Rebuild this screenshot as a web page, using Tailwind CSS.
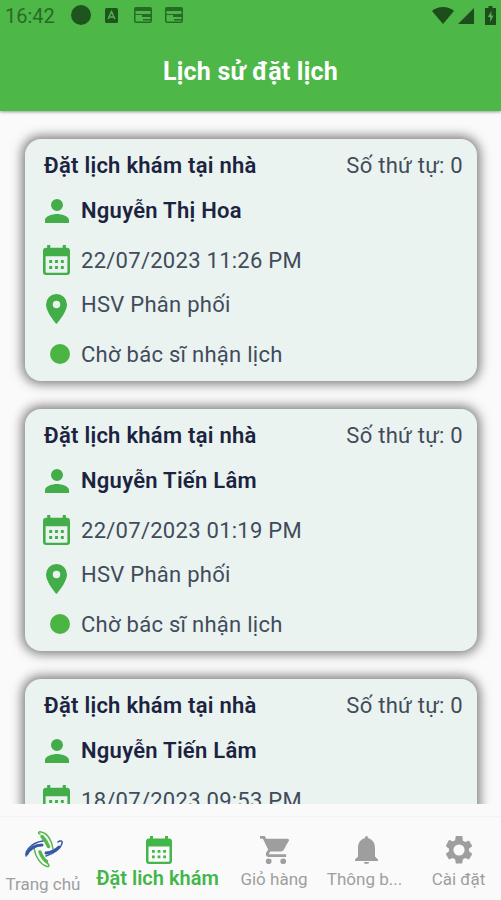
<!DOCTYPE html>
<html lang="vi">
<head>
  <meta charset="UTF-8" />
  <meta name="viewport" content="width=device-width, initial-scale=1" />
  <title>Lịch sử đặt lịch</title>
  <script src="https://cdn.jsdelivr.net/npm/@tailwindcss/browser@4"></script>
</head>
<body class="bg-[#fafafa] font-[Roboto,sans-serif]">
  <!-- Shared icons -->
  <svg class="hidden">
    <symbol id="person" viewBox="4 4 16 16"><path d="M12 12a4 4 0 1 0 0-8 4 4 0 0 0 0 8zm0 2c-2.67 0-8 1.34-8 4v2h16v-2c0-2.66-5.33-4-8-4z" /></symbol>
    <symbol id="calendar" viewBox="0 0 26 28" preserveAspectRatio="none"><path fill-rule="evenodd" d="M4 0h3v2.500h12V0h3v2.500h1a3 3 0 0 1 3 3V25a3 3 0 0 1-3 3H3a3 3 0 0 1-3-3V5.500a3 3 0 0 1 3-3h1zM2.500 10.500V25q0 .8.8.8h19.400q.8 0 .8-.8V10.500zM6 14h2.800v2.800H6zm5.600 0h2.800v2.800h-2.800zm5.600 0H20v2.800h-2.800zM6 19.500h2.800v2.800H6zm5.600 0h2.800v2.800h-2.800zm5.600 0H20v2.800h-2.800z" /></symbol>
    <symbol id="pin" viewBox="5 2 14 20"><path d="M12 2a7 7 0 0 0-7 7c0 5.250 7 13 7 13s7-7.750 7-13a7 7 0 0 0-7-7zm0 9.500a2.500 2.500 0 1 1 0-5 2.500 2.500 0 0 1 0 5z" /></symbol>
    <symbol id="window" viewBox="0 0 18 16"><path fill-rule="evenodd" d="M2 0h14a2 2 0 0 1 2 2v12a2 2 0 0 1-2 2H2a2 2 0 0 1-2-2V2a2 2 0 0 1 2-2zM1.500 4v3h15V4zM1.500 8v6.500h14.500q.5 0 .5-.5V8z" /><path d="M8 8h9v2H8zM9 12h8v1.500H9z" /></symbol>
  </svg>

  <div class="flex h-[900px] w-[501px] flex-col overflow-hidden">
    <header class="relative z-10 h-[111px] shrink-0 bg-[#4db748] shadow-[0_1px_3px_rgba(0,0,0,0.4)]">
      <div class="flex h-[30px] items-center pl-[5px] pr-[5px] text-[#1d531c]">
        <span class="w-[66px] pt-px text-[20px] leading-[30px] text-[#286b26]">16:42</span>
        <span class="h-5 w-5 rounded-full bg-[#1f551d]"></span>
        <svg class="ml-[14px] h-[15px] w-[13px]" viewBox="0 0 13 15"><rect width="13" height="15" rx="1.500" fill="#1f551d" /><path d="M3.200 11 6.500 3.500l3.300 7.500M4.500 9h4" fill="none" stroke="#4db748" stroke-width="1.500" /></svg>
        <svg class="ml-4 h-4 w-[18px]" fill="#276a25"><use href="#window" /></svg>
        <svg class="ml-[13px] h-4 w-[18px]" fill="#276a25"><use href="#window" /></svg>
        <svg class="ml-auto h-[17px] w-[22px]" viewBox="0 0 22 17" fill="#1d4d1b"><path d="M0 4C6-1.300 16-1.300 22 4L11 17z" /></svg>
        <svg class="ml-1 mt-px h-4 w-4" viewBox="0 0 16 16" fill="#1d4d1b"><path d="M16 0v16H0z" /></svg>
        <svg class="ml-[11px] h-[19px] w-[11px]" viewBox="0 0 11 19" fill="#1d4d1b"><path d="M3.500 0h4v2H11v17H0V2h3.500z" /><path d="M6.500 5 2.800 11h2.400v5L8.600 9.500H6.200z" fill="#4db748" /></svg>
      </div>
      <h1 class="pt-[26px] text-center text-[25px] font-bold leading-[32px] tracking-[0.2px] text-white">Lịch sử đặt lịch</h1>
    </header>

    <main class="flex h-[693px] shrink-0 flex-col gap-7 overflow-hidden pl-[25px] pr-6 pt-7">
      <article class="h-[242px] shrink-0 rounded-[16px] bg-[#eaf3ef] pl-[18px] pr-[14px] pt-[4px] text-[22px] tracking-[0.27px] text-[#414b5c] shadow-[0_0_11px_3px_rgba(0,0,0,0.5)]">
        <div class="flex h-[45px] items-center justify-between">
          <h2 class="ml-px font-semibold text-[#1b2340]">Đặt lịch khám tại nhà</h2>
          <span>Số thứ tự: 0</span>
        </div>
        <div class="flex h-[45px] items-center">
          <svg class="ml-[2px] mr-[12px] h-6 w-6" fill="#43ae49"><use href="#person" /></svg>
          <span class="font-semibold text-[#1b2340]">Nguyễn Thị Hoa</span>
        </div>
        <div class="flex h-[54px] items-center">
          <svg class="mr-[11px] h-[30px] w-[27px]" fill="#43ae49"><use href="#calendar" /></svg>
          <span>22/07/2023 11:26 PM</span>
        </div>
        <div class="flex h-[35px] items-center">
          <svg class="ml-[3px] mr-[14px] mt-[9px] h-[30px] w-[21px]" fill="#43ae49"><use href="#pin" /></svg>
          <span>HSV Phân phối</span>
        </div>
        <div class="flex h-[64px] items-center">
          <span class="ml-[7px] mr-[11px] h-5 w-5 rounded-full bg-[#4bb543]"></span>
          <span>Chờ bác sĩ nhận lịch</span>
        </div>
      </article>

      <article class="h-[242px] shrink-0 rounded-[16px] bg-[#eaf3ef] pl-[18px] pr-[14px] pt-[4px] text-[22px] tracking-[0.27px] text-[#414b5c] shadow-[0_0_11px_3px_rgba(0,0,0,0.5)]">
        <div class="flex h-[45px] items-center justify-between">
          <h2 class="ml-px font-semibold text-[#1b2340]">Đặt lịch khám tại nhà</h2>
          <span>Số thứ tự: 0</span>
        </div>
        <div class="flex h-[45px] items-center">
          <svg class="ml-[2px] mr-[12px] h-6 w-6" fill="#43ae49"><use href="#person" /></svg>
          <span class="font-semibold text-[#1b2340]">Nguyễn Tiến Lâm</span>
        </div>
        <div class="flex h-[54px] items-center">
          <svg class="mr-[11px] h-[30px] w-[27px]" fill="#43ae49"><use href="#calendar" /></svg>
          <span>22/07/2023 01:19 PM</span>
        </div>
        <div class="flex h-[35px] items-center">
          <svg class="ml-[3px] mr-[14px] mt-[9px] h-[30px] w-[21px]" fill="#43ae49"><use href="#pin" /></svg>
          <span>HSV Phân phối</span>
        </div>
        <div class="flex h-[64px] items-center">
          <span class="ml-[7px] mr-[11px] h-5 w-5 rounded-full bg-[#4bb543]"></span>
          <span>Chờ bác sĩ nhận lịch</span>
        </div>
      </article>

      <article class="h-[242px] shrink-0 rounded-[16px] bg-[#eaf3ef] pl-[18px] pr-[14px] pt-[4px] text-[22px] tracking-[0.27px] text-[#414b5c] shadow-[0_0_11px_3px_rgba(0,0,0,0.5)]">
        <div class="flex h-[45px] items-center justify-between">
          <h2 class="ml-px font-semibold text-[#1b2340]">Đặt lịch khám tại nhà</h2>
          <span>Số thứ tự: 0</span>
        </div>
        <div class="flex h-[45px] items-center">
          <svg class="ml-[2px] mr-[12px] h-6 w-6" fill="#43ae49"><use href="#person" /></svg>
          <span class="font-semibold text-[#1b2340]">Nguyễn Tiến Lâm</span>
        </div>
        <div class="flex h-[54px] items-center">
          <svg class="mr-[11px] h-[30px] w-[27px]" fill="#43ae49"><use href="#calendar" /></svg>
          <span>18/07/2023 09:53 PM</span>
        </div>
      </article>
    </main>

    <nav class="mt-[12px] grid h-[84px] shrink-0 grid-cols-[86px_143px_90px_91px_91px] border-t border-[#f3f3f3] text-[17px] leading-6 text-[#9e9e9e]">
      <a class="flex flex-col items-center pt-[13px]">
        <svg class="h-[38px] w-[39px]" viewBox="0 0 39 38" fill="none" stroke-linecap="round">
          <g stroke="#52b84a">
            <path d="M16 4c-2 0-2-3 1-2 6 1 11 8 12 17" stroke-width="1.500" />
            <path d="M18 6.500c3 3 5 6 6.500 10" stroke-width="3.500" />
            <path d="M23 33c2 1 3 4 0 3.500C17 35 11 27 10 17" stroke-width="1.500" />
            <path d="M16 22c1.500 4 3 7 6.500 9.500" stroke-width="3.500" />
          </g>
          <g stroke="#3457a8">
            <path d="M2 26c-1-7 8-14 17-15" stroke-width="1.500" />
            <path d="M3 24c2-5 8-9 15-9" stroke-width="3" />
            <path d="M34 12c2-2 5-1 4 1-1 6-9 11-16 13" stroke-width="1.500" />
            <path d="M22 23c5-.5 9-2 13-6" stroke-width="3" />
          </g>
        </svg>
        <span class="pt-[4px]">Trang chủ</span>
      </a>
      <a class="flex flex-col items-center pt-[19px] text-[20px] font-semibold text-[#43b649]">
        <svg class="ml-[2px] h-[28px] w-[26px]" fill="currentColor"><use href="#calendar" /></svg>
        <span class="whitespace-nowrap pt-[2px]">Đặt lich khám</span>
      </a>
      <a class="flex flex-col items-center pt-[19px]">
        <svg class="h-[28px] w-[29px]" viewBox="1 2 20 20" preserveAspectRatio="none" fill="currentColor"><path d="M7 18a2 2 0 1 0 0 4 2 2 0 0 0 0-4zM1 2v2h2l3.600 7.590-1.350 2.450C4.520 15.370 5.480 17 7 17h12v-2H7.420a.25.25 0 0 1-.25-.25L8.100 13h7.450c.75 0 1.410-.41 1.750-1.030L20.880 5.480A1 1 0 0 0 20 4H5.210l-.94-2zm16 16a2 2 0 1 0 0 4 2 2 0 0 0 0-4z" /></svg>
        <span class="pt-[3px]">Giỏ hàng</span>
      </a>
      <a class="flex flex-col items-center pt-[19px]">
        <svg class="ml-[4px] h-[28px] w-[23px]" viewBox="0 0 23 28" fill="currentColor"><path d="M11.500 0q1.200 0 1.800 2.200C18 3.500 20 7.500 20 12v8.500l3 3v1.500H0v-1.500l3-3V12c0-4.500 2-8.500 6.700-9.800Q10.300 0 11.500 0zM8.800 26h5.400a2.700 2 0 0 1-5.400 0z" /></svg>
        <span class="pt-[3px]">Thông b...</span>
      </a>
      <a class="flex flex-col items-center pl-[6px] pt-[19px]">
        <svg class="h-[28px] w-[28px]" viewBox="2 2 20 20" fill="currentColor"><path d="M19.140 12.940c.04-.3.060-.61.060-.94s-.02-.64-.07-.94l2.030-1.580c.18-.14.23-.41.120-.61l-1.920-3.320c-.12-.22-.37-.29-.59-.22l-2.390.96c-.5-.38-1.030-.7-1.620-.94l-.36-2.540A.48.48 0 0 0 13.920 2h-3.840c-.24 0-.43.17-.47.41l-.36 2.540c-.59.24-1.130.57-1.620.94l-2.390-.96c-.22-.08-.47 0-.59.22L2.740 8.870c-.12.21-.08.47.12.61l2.030 1.580c-.05.3-.09.63-.09.94s.02.64.07.94l-2.030 1.580c-.18.14-.23.41-.12.61l1.920 3.320c.12.22.37.29.59.22l2.390-.96c.5.38 1.030.7 1.620.94l.36 2.540c.05.24.24.41.48.41h3.840c.24 0 .44-.17.47-.41l.36-2.540c.59-.24 1.130-.56 1.620-.94l2.390.96c.22.08.47 0 .59-.22l1.920-3.320c.12-.22.07-.47-.12-.61zM12 16a4 4 0 1 1 0-8 4 4 0 0 1 0 8z" /></svg>
        <span class="pt-[3px]">Cài đặt</span>
      </a>
    </nav>
  </div>
</body>
</html>
